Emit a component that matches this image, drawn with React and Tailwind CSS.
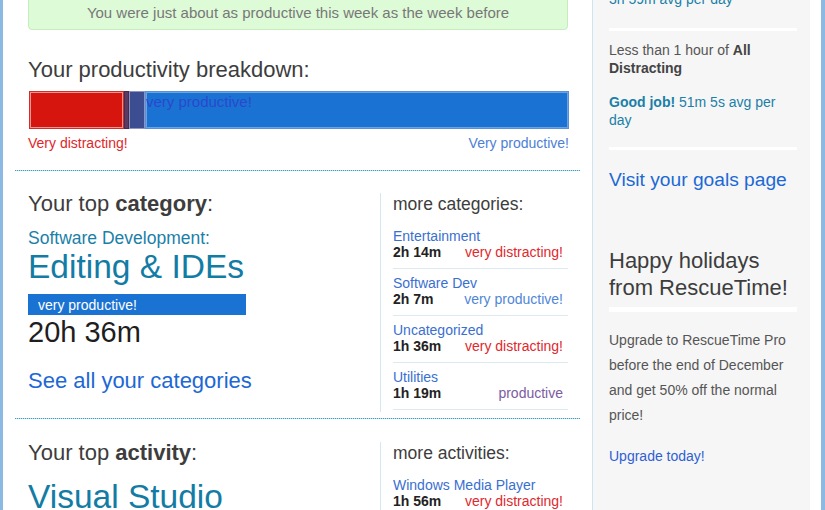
const categories = [
  { name: "Entertainment", time: "2h 14m", status: "very distracting!", cls: "text-[#e0282d]" },
  { name: "Software Dev", time: "2h 7m", status: "very productive!", cls: "text-[#4f86d8]" },
  { name: "Uncategorized", time: "1h 36m", status: "very distracting!", cls: "text-[#e0282d]" },
  { name: "Utilities", time: "1h 19m", status: "productive", cls: "text-[#7c5c9f]" },
];

const activities = [
  { name: "Windows Media Player", time: "1h 56m", status: "very distracting!", cls: "text-[#e0282d]" },
];

function MoreList({ title, items }) {
  return (
    <div className="mt-[2px] flex-1 border-l border-[#d3e6f1] pl-[12px] pr-[12px] pb-[2px]">
      <h3 className="pt-[1px] text-[17.5px] leading-[21px] text-[#3d3d3d]">{title}</h3>
      <div className="mt-[7px]">
        {items.map((it) => (
          <div key={it.name} className="border-b border-[#dde9f0] pt-[6px] pb-[8px]">
            <div className="text-[14px] leading-[16px] text-[#3a6fd0]">{it.name}</div>
            <div className="flex justify-between pr-[5px] text-[14px] leading-[16px]">
              <b className="text-[#222]">{it.time}</b>
              <span className={it.cls}>{it.status}</span>
            </div>
          </div>
        ))}
      </div>
    </div>
  );
}

function Dotted({ className = "" }) {
  return (
    <div
      className={
        "h-[1px] bg-[repeating-linear-gradient(90deg,#3a9fc4_0_1px,#bfe0ec_1px_2px)] " + className
      }
    />
  );
}

export default function App() {
  return (
    <div className="flex h-[510px] w-[825px] overflow-hidden bg-white font-['Liberation_Sans',Arial,sans-serif]">
      <div className="w-[3px] shrink-0 bg-[#8cb9e3]" />
      <main className="w-[589px] shrink-0 px-[12px]">
        <div className="pl-[13px] pr-[11px]">
          <div className="mt-[-14px] mr-[1px] rounded-b-[4px] border border-[#c6ebbd] bg-[#defbd7] pt-[17px] pb-[8px] text-center text-[15px] leading-[17px] text-[#787878]">
            You were just about as productive this week as the week before
          </div>
          <h2 className="mt-[27px] text-[22px] leading-[26px] text-[#3d3d3d]">Your productivity breakdown:</h2>
          <div className="mt-[8px] flex h-[38px] pl-[1px]">
            <div className="w-[95px] shrink-0 border border-[#c9302c] bg-[#d6150f] shadow-[inset_0_0_0_1px_rgba(255,255,255,0.55)]" />
            <div className="w-[5px] shrink-0 border border-[#4a2b50] bg-[#5c3a62]" />
            <div className="w-[16px] shrink-0 border border-[#8c95c0] bg-[#3d4d92]" />
            <div className="flex-1 border border-[#5b8fd8] bg-[#1a73d3] pt-[1px] text-[15px] leading-[17px] text-[#2a48cf] shadow-[inset_0_0_0_1px_rgba(255,255,255,0.35)]">
              very productive!
            </div>
          </div>
          <div className="mt-[6px] flex justify-between text-[14px] leading-[17px]">
            <span className="text-[#e0262b]">Very distracting!</span>
            <span className="text-[#4d80d6]">Very productive!</span>
          </div>
        </div>

        <Dotted className="mt-[18px]" />

        <section className="flex items-start pt-[20px] pb-[6px]">
          <div className="w-[365px] shrink-0 pl-[13px]">
            <h2 className="text-[22px] leading-[26px] text-[#3d3d3d]">
              Your top <b>category</b>:
            </h2>
            <div className="mt-[11px] text-[17.5px] leading-[21px] text-[#1b7fa7]">Software Development:</div>
            <div className="text-[33.5px] leading-[36px] text-[#137ca5]">Editing &amp; IDEs</div>
            <div className="mt-[9px] h-[21px] w-[218px] bg-[#1a73d3] pl-[10px] pt-[1px] text-[14px] leading-[20px] text-white">
              very productive!
            </div>
            <div className="mt-[1px] text-[29px] leading-[33px] text-[#1e1e1e]">20h 36m</div>
            <a className="mt-[19px] block text-[22px] leading-[26px] text-[#1d68d4]">See all your categories</a>
          </div>
          <MoreList title="more categories:" items={categories} />
        </section>

        <Dotted />

        <section className="flex items-start pt-[21px]">
          <div className="w-[365px] shrink-0 pl-[13px]">
            <h2 className="text-[22px] leading-[26px] text-[#3d3d3d]">
              Your top <b>activity</b>:
            </h2>
            <div className="mt-[13px] text-[33.5px] leading-[36px] text-[#137ca5]">Visual Studio</div>
          </div>
          <MoreList title="more activities:" items={activities} />
        </section>
      </main>

      <aside className="w-[218px] shrink-0 border-l border-[#cfe3f2] bg-[#f6f6f6] pl-[16px] pr-[13px] text-[14px] leading-[18px]">
        <p className="mt-[-10px] text-[#1b7fa7]">3h 59m avg per day</p>
        <div className="mt-[20px] h-[3px] bg-white" />
        <p className="mt-[10px] text-[#555]">
          Less than 1 hour of <b className="text-[#444]">All Distracting</b>
        </p>
        <p className="mt-[16px] text-[#1b7fa7]">
          <b>Good job!</b> 51m 5s avg per day
        </p>
        <div className="mt-[18px] h-[3px] bg-white" />
        <a className="mt-[18px] block text-[19.2px] leading-[23px] text-[#1c69d4]">Visit your goals page</a>
        <h3 className="mt-[56px] text-[22px] leading-[27px] text-[#3d3d3d]">Happy holidays from RescueTime!</h3>
        <div className="mt-[6px] h-[5px] bg-white" />
        <p className="mt-[16px] leading-[25px] text-[#555]">
          Upgrade to RescueTime Pro before the end of December and get 50% off the normal price!
        </p>
        <a className="mt-[16px] block leading-[25px] text-[#2f5fd3]">Upgrade today!</a>
      </aside>

      <div className="w-[11px] shrink-0 bg-white" />
      <div className="w-[4px] shrink-0 bg-[#8cb9e3]" />
    </div>
  );
}
